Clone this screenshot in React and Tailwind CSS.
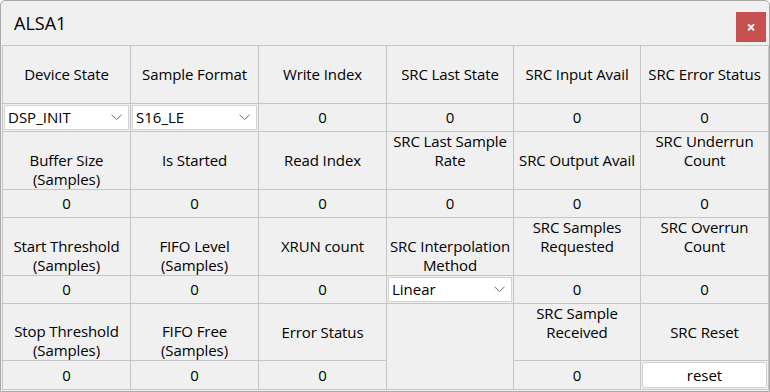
import React from "react";

const F = { fontFamily: '"Open Sans", "Noto Sans", sans-serif' };

function Chevron() {
  return (
    <svg width="11" height="7" viewBox="0 0 11 7" className="shrink-0">
      <polyline points="0.5,0.8 5.5,5.5 10.5,0.8" fill="none" stroke="#6e6e6e" strokeWidth="1" />
    </svg>
  );
}

function Header({ lines }) {
  return (
    <div className="bg-[#f0f0f0] flex flex-col justify-center text-center text-[15px] leading-[19px] text-black whitespace-nowrap tracking-[-0.1px]">
      {lines.map((l, i) => (
        <div key={i} className="h-[19px]">{l}</div>
      ))}
    </div>
  );
}

function Value({ v = "0" }) {
  return (
    <div className="bg-[#f0f0f0] flex items-center justify-center text-[15px] text-black">{v}</div>
  );
}

function Select({ v }) {
  return (
    <div className="bg-[#f0f0f0] p-px flex">
      <div className="flex-1 bg-white border border-[#d4d4d4] flex items-center justify-between pl-[3px] pr-[6px] text-[15px] text-black">
        <span>{v}</span>
        <Chevron />
      </div>
    </div>
  );
}

export default function App() {
  return (
    <div style={F} className="w-[770px] h-[392px] bg-[#f0f0f0] border border-[#a9a9a9] rounded-t-[5px] flex flex-col overflow-hidden">
      <div className="h-[44px] flex items-center justify-between pl-[13px] pr-[2px]">
        <span className="text-[18px] text-black">ALSA1</span>
        <div className="w-[30px] h-[30px] mt-[8px] bg-[#c75050] flex items-center justify-center text-white text-[16px] font-bold mr-[1px]">×</div>
      </div>
      <div className="ml-px grid grid-cols-[127px_127px_127px_126px_126px_127px] grid-rows-[57px_27px_57px_27px_57px_27px_56px_28px] gap-px bg-[#c6c6c6] border border-[#c6c6c6] w-[767px]">
        <Header lines={["", "Device State", ""]} />
        <Header lines={["", "Sample Format", ""]} />
        <Header lines={["", "Write Index", ""]} />
        <Header lines={["", "SRC Last State", ""]} />
        <Header lines={["", "SRC Input Avail", ""]} />
        <Header lines={["", "SRC Error Status", ""]} />

        <Select v="DSP_INIT" />
        <Select v="S16_LE" />
        <Value />
        <Value />
        <Value />
        <Value />

        <Header lines={["", "Buffer Size", "(Samples)"]} />
        <Header lines={["", "Is Started", ""]} />
        <Header lines={["", "Read Index", ""]} />
        <Header lines={["SRC Last Sample", "Rate", ""]} />
        <Header lines={["", "SRC Output Avail", ""]} />
        <Header lines={["SRC Underrun", "Count", ""]} />

        <Value />
        <Value />
        <Value />
        <Value />
        <Value />
        <Value />

        <Header lines={["", "Start Threshold", "(Samples)"]} />
        <Header lines={["", "FIFO Level", "(Samples)"]} />
        <Header lines={["", "XRUN count", ""]} />
        <Header lines={["", "SRC Interpolation", "Method"]} />
        <Header lines={["SRC Samples", "Requested", ""]} />
        <Header lines={["SRC Overrun", "Count", ""]} />

        <Value />
        <Value />
        <Value />
        <Select v="Linear" />
        <Value />
        <Value />

        <Header lines={["", "Stop Threshold", "(Samples)"]} />
        <Header lines={["", "FIFO Free", "(Samples)"]} />
        <Header lines={["", "Error Status", ""]} />
        <div className="bg-[#f0f0f0] row-span-2" />
        <Header lines={["SRC Sample", "Received", ""]} />
        <Header lines={["", "SRC Reset", ""]} />

        <Value />
        <Value />
        <Value />
        <Value />
        <div className="bg-[#f0f0f0] p-px flex">
          <div className="flex-1 bg-white border border-[#d0d0d0] rounded-[3px] flex items-center justify-center text-[15px] text-black">reset</div>
        </div>
      </div>
    </div>
  );
}
